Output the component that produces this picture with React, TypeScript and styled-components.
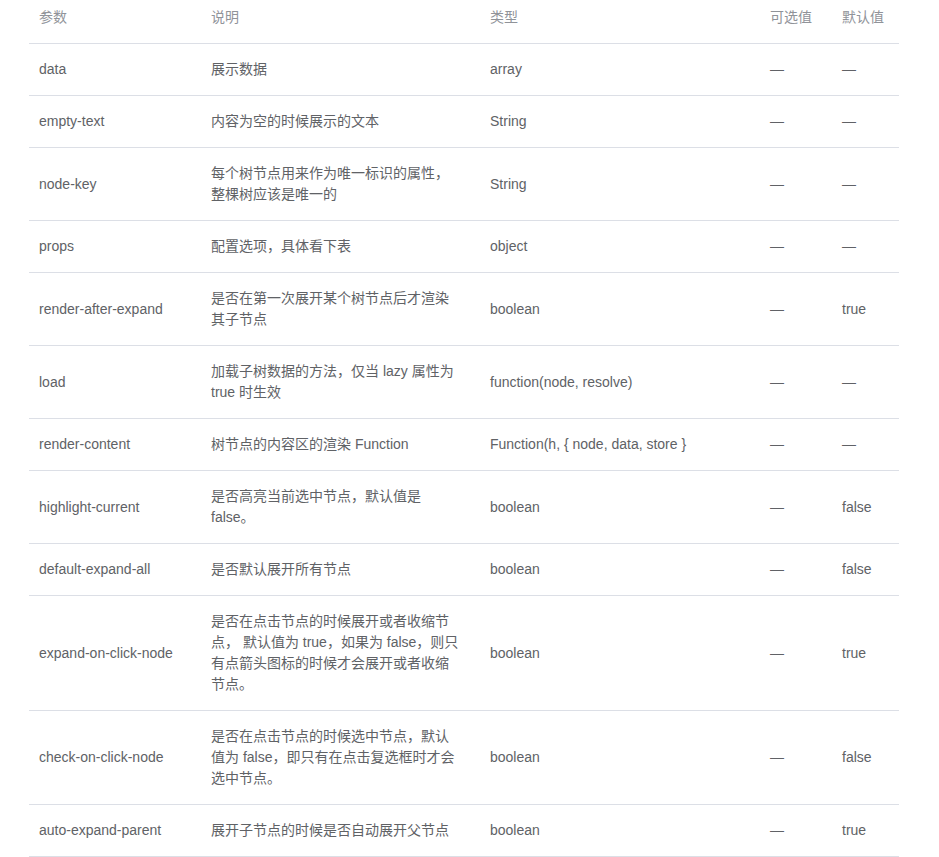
import React from "react";
import styled, { createGlobalStyle } from "styled-components";

const GlobalStyle = createGlobalStyle`
  body {
    margin: 0;
    background: #fff;
    font-family: "Liberation Sans", "Noto Sans CJK SC", sans-serif;
  }
`;

const Page = styled.div`
  padding: 0 40px 0 29px;
`;

const Table = styled.table`
  width: 870px;
  border-collapse: collapse;
  table-layout: fixed;
  font-size: 14px;
  line-height: 21px;
`;

const HeadCell = styled.th`
  text-align: left;
  font-weight: normal;
  color: #909399;
  padding: 7px 20px 15px 10px;
  border-bottom: 1px solid #dcdfe6;
  white-space: nowrap;
`;

const Cell = styled.td`
  color: #606266;
  padding: 15px 20px 15px 10px;
  border-bottom: 1px solid #dcdfe6;
  vertical-align: middle;
`;

type Row = [string, string, string, string, string];

const rows: Row[] = [
  ["data", "展示数据", "array", "—", "—"],
  ["empty-text", "内容为空的时候展示的文本", "String", "—", "—"],
  ["node-key", "每个树节点用来作为唯一标识的属性，整棵树应该是唯一的", "String", "—", "—"],
  ["props", "配置选项，具体看下表", "object", "—", "—"],
  ["render-after-expand", "是否在第一次展开某个树节点后才渲染其子节点", "boolean", "—", "true"],
  ["load", "加载子树数据的方法，仅当 lazy 属性为true 时生效", "function(node, resolve)", "—", "—"],
  ["render-content", "树节点的内容区的渲染 Function", "Function(h, { node, data, store }", "—", "—"],
  ["highlight-current", "是否高亮当前选中节点，默认值是 false。", "boolean", "—", "false"],
  ["default-expand-all", "是否默认展开所有节点", "boolean", "—", "false"],
  [
    "expand-on-click-node",
    "是否在点击节点的时候展开或者收缩节点， 默认值为 true，如果为 false，则只有点箭头图标的时候才会展开或者收缩节点。",
    "boolean",
    "—",
    "true",
  ],
  [
    "check-on-click-node",
    "是否在点击节点的时候选中节点，默认值为 false，即只有在点击复选框时才会选中节点。",
    "boolean",
    "—",
    "false",
  ],
  ["auto-expand-parent", "展开子节点的时候是否自动展开父节点", "boolean", "—", "true"],
];

const widths = [172, 279, 280, 72, 67];
const heads = ["参数", "说明", "类型", "可选值", "默认值"];

export default function App() {
  return (
    <Page>
      <GlobalStyle />
      <Table>
        <colgroup>
          {widths.map((w, i) => (
            <col key={i} style={{ width: w }} />
          ))}
        </colgroup>
        <thead>
          <tr>
            {heads.map((h) => (
              <HeadCell key={h}>{h}</HeadCell>
            ))}
          </tr>
        </thead>
        <tbody>
          {rows.map((r) => (
            <tr key={r[0]}>
              {r.map((c, i) => (
                <Cell key={i}>{c}</Cell>
              ))}
            </tr>
          ))}
        </tbody>
      </Table>
    </Page>
  );
}
